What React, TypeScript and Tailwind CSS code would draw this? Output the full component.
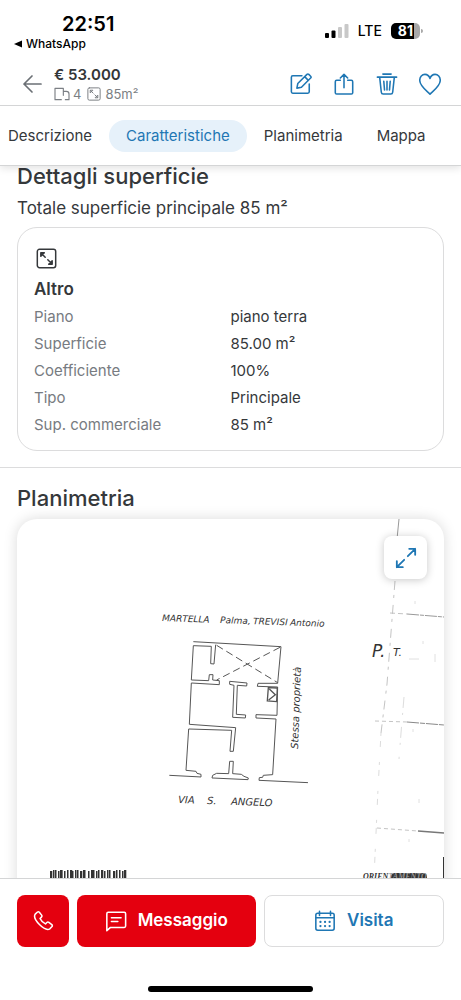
import type { ReactNode } from 'react';

const TABS = ['Descrizione', 'Caratteristiche', 'Planimetria', 'Mappa'];

const DETAILS = [
  { label: 'Piano', value: 'piano terra' },
  { label: 'Superficie', value: '85.00 m²' },
  { label: 'Coefficiente', value: '100%' },
  { label: 'Tipo', value: 'Principale' },
  { label: 'Sup. commerciale', value: '85 m²' },
];

const BARS = [0, 3, 5, 8, 10, 11, 14, 17, 20, 22, 25, 27, 30, 33, 34, 38, 41, 43, 46, 48, 51, 54, 57, 59, 63, 66, 69, 72, 74];

function Icon({ className, children }: { className: string; children: ReactNode }) {
  return (
    <svg
      viewBox="0 0 24 24"
      fill="none"
      stroke="currentColor"
      strokeWidth="1.7"
      strokeLinecap="round"
      strokeLinejoin="round"
      aria-hidden="true"
      className={`shrink-0 ${className}`}
    >
      {children}
    </svg>
  );
}

function SurfaceIcon({ className }: { className: string }) {
  return (
    <Icon className={className}>
      <rect x="1.500" y="1.500" width="21" height="21" rx="2.500" />
      <path d="M5.500 9.500v-4h4zM6 6l4.500 4.500M18.500 14.500v4h-4zM18 18l-4.500-4.500" />
    </Icon>
  );
}

function StatusBar() {
  return (
    <div className="flex items-start justify-between pl-[14px] pr-[38px] pt-3 text-black">
      <div>
        <p className="pl-12 text-xl leading-6 font-semibold">22:51</p>
        <a href="#whatsapp" className="flex items-center gap-1 text-xs leading-4 font-medium">
          <svg viewBox="0 0 8 8" className="size-2" aria-hidden="true">
            <path d="M0 4 8 .5v7z" fill="currentColor" />
          </svg>
          WhatsApp
        </a>
      </div>
      <div className="flex items-center gap-[9px] pt-[11px]">
        <svg viewBox="0 0 24 16" className="h-4 w-6" aria-hidden="true">
          <rect x="0" y="10" width="4" height="5" rx="1" />
          <rect x="6.500" y="7.500" width="4" height="7.500" rx="1" />
          <rect x="13" y="4" width="4" height="11" rx="1" fill="#c8c8c8" />
          <rect x="19.500" y="1" width="4" height="14" rx="1" fill="#c8c8c8" />
        </svg>
        <span className="text-sm leading-4 font-medium">LTE</span>
        <span className="flex items-center">
          <span className="rounded-[5px] bg-linear-to-r from-black from-80% to-[#a8a8a8] to-80% px-[7px] text-sm leading-4 font-bold text-white">
            81
          </span>
          <span className="ml-px h-1 w-0.5 rounded-r-full bg-[#a8a8a8]" />
        </span>
      </div>
    </div>
  );
}

function ListingHeader() {
  return (
    <div className="flex items-center px-5 pt-[13px] pb-0.5">
      <button type="button" aria-label="Indietro" className="mr-2 text-[#6b7075]">
        <Icon className="size-6">
          <path d="M21 12H4M12 4l-8 8 8 8" />
        </Icon>
      </button>
      <div className="flex-1 pl-0.5">
        <p className="text-[15px] leading-5 font-semibold text-[#333638]">€ 53.000</p>
        <p className="flex items-center text-[13px] leading-[18px] text-[#7b7f84]">
          <Icon className="mr-[3px] size-4">
            <path d="M11 20.500H1.500v-17H14V14M14 8h4.500q4 0 4 4v8.500H17" />
          </Icon>
          4
          <SurfaceIcon className="mr-1 ml-1.5 size-[14px]" />
          85m²
        </p>
      </div>
      <div className="flex gap-[21px] text-[#1f77b4]">
        <button type="button" aria-label="Modifica">
          <Icon className="size-[22px]">
            <path d="M13 3H3Q1.500 3 1.500 4.500v16Q1.500 22 3 22h16.500q1.500 0 1.500-1.500V12" />
            <path d="m7.500 16.500 1-5 10-10q1-1 2 0l2 2q1 1 0 2l-10 10zM16 4l4 4" />
          </Icon>
        </button>
        <button type="button" aria-label="Condividi">
          <Icon className="size-[22px]">
            <path d="M8 8H4Q2.500 8 2.500 9.500v12Q2.500 23 4 23h16q1.500 0 1.500-1.500v-12Q21.500 8 20 8H16M12 16V1.500M8 5.500l4-4 4 4" />
          </Icon>
        </button>
        <button type="button" aria-label="Elimina">
          <Icon className="size-[22px]">
            <path d="M1.500 4.500h21M7.500 1.200h9M4 4.500l1.800 16.500q.2 2 2 2h8.400q1.800 0 2-2L20 4.500M8.500 9l.8 9.500M12 9v9.500M15.500 9l-.8 9.500" />
          </Icon>
        </button>
        <button type="button" aria-label="Salva">
          <Icon className="size-[22px]">
            <path d="M12 23C8 19 .8 14.500 .8 8c0-3.700 2.600-6.500 5.700-6.500C9.200 1.500 11 3 12 6c1-3 2.800-4.500 5.500-4.500 3.100 0 5.700 2.800 5.700 6.500 0 6.500-7.200 11-11.200 15z" />
          </Icon>
        </button>
      </div>
    </div>
  );
}

function FloorPlan() {
  return (
    <svg viewBox="0 0 427 400" className="block w-full" role="img" aria-label="Planimetria">
      {/* creases of the scanned sheet */}
      <g fill="none" stroke="#c4c4c4">
        <path d="M382 0 380 20" stroke="#999" />
        <path d="M378 62 370 165 364 214" strokeDasharray="9 5 3 7" />
        <path d="M364 214 361 270 357 359" strokeDasharray="3 5 6 15" stroke="#dcdcdc" />
        <path d="M387 178 384 214 382 240" strokeDasharray="11 5 2 12" stroke="#ddd" />
        <path d="M373 94 390 95" strokeDasharray="5 3" />
        <path d="M390 95 427 98" stroke="#999" strokeDasharray="12 1 4 1" />
        <path d="M358 202 390 203" strokeDasharray="4 3" />
        <path d="M390 203 427 206" stroke="#888" strokeDasharray="12 1 5 1" />
        <path d="M360 309 401 312" strokeDasharray="4 3" />
        <path d="M401 312 427 314" stroke="#777" strokeWidth="1.500" />
        <path d="M426.500 338v62" stroke="#333" />
        <path d="M398 82v3M418 135v8M392 140h10M406 122v3M396 210v3M402 280v4M392 320v3" stroke="#e0e0e0" />
      </g>

      {/* walls, drawn on a grid three times finer */}
      <g transform="translate(133 81) scale(.3333)" fill="none" stroke="#555" strokeWidth="3">
        <path d="M130 125 393 140M130 137 184 139 182 191 192 192 197 134" />
        <path d="M130 137 124 240 176 242 178 224 189 224 188 240 208 242 208 254 124 249 118 373" />
        <path d="M239 244 291 249 290 258 262 256 259 343 287 345 286 354 248 352 252 256 239 253Z" />
        <path d="M393 140 383 250 324 250 322 259 383 261 381 346 318 344 318 354 378 357 368 524 340 526 338 532 328 533 327 541 474 548" />
        <path d="M118 373 257 383 250 454 240 454 245 391 116 387 108 511 138 514 141 520 153 523 153 531 58 526" />
        <path d="M186 534 188 526 200 520 236 521 239 484 250 484 248 521 274 523 282 529 295 534 294 539Z" />
        <path d="M355 263 382 264 380 305 352 303ZM358 267 376 284 356 300" strokeWidth="4" />
        <path d="M200 136 383 248M390 142 200 240" strokeDasharray="22 12" />
      </g>

      <g className="font-['DejaVu_Sans'] italic" fill="#333">
        <g fontSize="9" transform="rotate(2 145 102)">
          <text x="145" y="102">MARTELLA</text>
          <text x="203" y="102">Palma,</text>
          <text x="236" y="102">TREVISI</text>
          <text x="273" y="102">Antonio</text>
        </g>
        <text fontSize="10" transform="translate(281 230) rotate(-88)">Stessa proprietà</text>
        <g fontSize="10" transform="rotate(2 161 284)">
          <text x="161" y="284">VIA</text>
          <text x="190" y="284">S.</text>
          <text x="214" y="284">ANGELO</text>
        </g>
        <text x="355" y="138" fontSize="17">P.</text>
        <text x="376" y="137" fontSize="11">T.</text>
      </g>

      <g fill="#333">
        {BARS.map((x, i) => (
          <rect key={x} x={33 + x} y={i % 3 ? 351 : 352} width={i % 4 ? 1.5 : 2.3} height="20" />
        ))}
      </g>
      <rect x="374" y="354" width="36" height="12" rx="4" fill="#333" />
      <text x="346" y="360" fontSize="8" fill="#333" className="font-['Liberation_Serif'] font-bold italic">
        ORIEN<tspan fill="#999">TAMENTO</tspan>
      </text>
    </svg>
  );
}

export default function App() {
  return (
    <div className="flex h-screen flex-col overflow-hidden bg-white font-['Inter',sans-serif] text-[#35383b]">
      <header className="relative z-10 shrink-0 bg-white shadow-[0_2px_8px_rgba(0,0,0,0.12)]">
        <StatusBar />
        <ListingHeader />
        <nav className="flex h-[61px] items-center border-y border-[#d4d5d6] pl-2 text-[15px]">
          {TABS.map((tab) => (
            <a
              key={tab}
              href={`#${tab.toLowerCase()}`}
              className={
                tab === 'Caratteristiche'
                  ? 'mx-[17px] rounded-full bg-[#e6f1fa] px-[17px] py-1 leading-6 text-[#1f77b4]'
                  : 'mr-[34px] py-1 leading-6 first:mr-0'
              }
            >
              {tab}
            </a>
          ))}
        </nav>
      </header>

      <main className="min-h-0 flex-1 overflow-hidden">
        <section id="caratteristiche" className="border-b border-[#dcdcdd] px-[17px] pb-4">
          <h2 className="text-[22px] leading-5 font-medium">Dettagli superficie</h2>
          <p className="mt-[10px] text-[17px] leading-6">Totale superficie principale 85 m²</p>
          <div className="mt-[7px] rounded-[20px] border border-[#dcdcdd] px-4 pt-[18px] pb-3">
            <div className="flex size-6 items-center justify-center">
              <SurfaceIcon className="size-[21px]" />
            </div>
            <h3 className="mt-[7px] text-[17px] leading-6 font-semibold">Altro</h3>
            <dl className="mt-0.5 text-[15px] leading-[27px]">
              {DETAILS.map((row) => (
                <div key={row.label} className="grid grid-cols-2">
                  <dt className="text-[#777b81]">{row.label}</dt>
                  <dd>{row.value}</dd>
                </div>
              ))}
            </dl>
          </div>
        </section>

        <section id="planimetria" className="px-[17px] pt-4">
          <h2 className="text-[22px] leading-7 font-medium">Planimetria</h2>
          <div className="relative mt-[7px] overflow-hidden rounded-[20px] shadow-[0_0_14px_rgba(0,0,0,0.15)]">
            <FloorPlan />
            <button
              type="button"
              aria-label="Ingrandisci"
              className="absolute top-[17px] right-[17px] flex size-[43px] items-center justify-center rounded-lg bg-white text-[#1f77b4] shadow-[0_1px_8px_rgba(0,0,0,0.22)]"
            >
              <Icon className="size-[22px]">
                <path d="M14 10l8-8M15.500 2H22v6.500M10 14l-8 8M2 15.500V22h6.500" strokeWidth="2" />
              </Icon>
            </button>
          </div>
        </section>
      </main>

      <footer className="relative z-10 shrink-0 border-t border-[#d4d5d6] bg-white px-[17px] pt-4 pb-2">
        <div className="flex gap-2 text-[17px] font-semibold">
          <button
            type="button"
            aria-label="Chiama"
            className="flex h-[52px] w-[52px] shrink-0 items-center justify-center rounded-lg bg-[#e4000f] text-white"
          >
            <Icon className="size-[22px]">
              <path d="M3.500 4.500 6 2.200q1-.8 2 .2l2.500 3.200q.8 1.200-.2 2.200L8.800 9.300q1.500 3.600 5.900 5.900l1.500-1.500q1-1 2.200-.2l3.200 2.500q1 1 .2 2l-2.300 2.500C14 24 0 10 3.500 4.500z" />
            </Icon>
          </button>
          <button
            type="button"
            className="flex h-[52px] flex-1 items-center justify-center gap-[11px] rounded-lg bg-[#e4000f] text-white"
          >
            <Icon className="size-[22px]">
              <path d="M2 22.500V4q0-1.500 1.500-1.500h17.500Q22.500 2.500 22.500 4v13.500q0 1.500-1.500 1.500H6zM7 8.500h10.500M7 12.500h7" />
            </Icon>
            Messaggio
          </button>
          <button
            type="button"
            className="flex h-[52px] flex-1 items-center justify-center gap-[11px] rounded-lg border border-[#dcdcdd] text-[#1f77b4]"
          >
            <Icon className="size-[22px]">
              <rect x="2" y="3.500" width="20" height="18.500" rx="2" />
              <path d="M2 8.500h20M6 1.500v4.500M18 1.500v4.500" />
              <path d="M7 13h.1M12 13h.1M17 13h.1M7 17.500h.1M12 17.500h.1M17 17.500h.1" strokeWidth="2.400" />
            </Icon>
            Visita
          </button>
        </div>
        <div className="mx-auto mt-[39px] h-[6px] w-[165px] rounded-full bg-black" />
      </footer>
    </div>
  );
}
